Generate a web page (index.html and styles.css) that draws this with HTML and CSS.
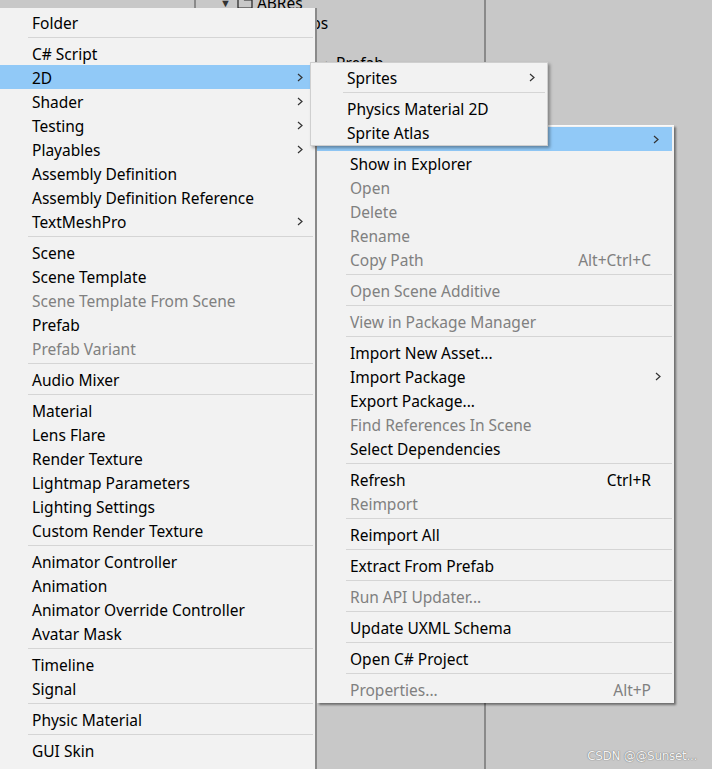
FILE: index.html
```html
<!DOCTYPE html>
<html>
<head>
<meta charset="utf-8">
<link rel="stylesheet" href="styles.css">
</head>
<body>
<div class="stage">
  <div class="panels">
    <div class="panel p1"></div>
    <div class="panel p2">
      <div class="tree">
        <div class="trow r0"><span class="tri">▼</span><svg class="fold" width="16" height="12" viewBox="0 0 16 12"><path d="M1 1h5l1.5 2H15v8H1z" fill="none" stroke="#222" stroke-width="1.2"/></svg><span>ABRes</span></div>
        <div class="trow r1"><span>Prefabs</span></div>
        <div class="trow r2"><span>UI</span></div>
        <div class="trow r3"><span class="tri small">▸</span><span>Prefab</span></div>
      </div>
    </div>
    <div class="panel p3"></div>
  </div>

  <div class="menu left">
    <div class="item">Folder</div>
    <div class="sep"></div>
    <div class="item">C# Script</div>
    <div class="item sub hl">2D<svg class="arr" width="6" height="9" viewBox="0 0 6 9"><polyline points="1,1 5,4.5 1,8"/></svg></div>
    <div class="item sub">Shader<svg class="arr" width="6" height="9" viewBox="0 0 6 9"><polyline points="1,1 5,4.5 1,8"/></svg></div>
    <div class="item sub">Testing<svg class="arr" width="6" height="9" viewBox="0 0 6 9"><polyline points="1,1 5,4.5 1,8"/></svg></div>
    <div class="item sub">Playables<svg class="arr" width="6" height="9" viewBox="0 0 6 9"><polyline points="1,1 5,4.5 1,8"/></svg></div>
    <div class="item">Assembly Definition</div>
    <div class="item">Assembly Definition Reference</div>
    <div class="item sub">TextMeshPro<svg class="arr" width="6" height="9" viewBox="0 0 6 9"><polyline points="1,1 5,4.5 1,8"/></svg></div>
    <div class="sep"></div>
    <div class="item">Scene</div>
    <div class="item">Scene Template</div>
    <div class="item dis">Scene Template From Scene</div>
    <div class="item">Prefab</div>
    <div class="item dis">Prefab Variant</div>
    <div class="sep"></div>
    <div class="item">Audio Mixer</div>
    <div class="sep"></div>
    <div class="item">Material</div>
    <div class="item">Lens Flare</div>
    <div class="item">Render Texture</div>
    <div class="item">Lightmap Parameters</div>
    <div class="item">Lighting Settings</div>
    <div class="item">Custom Render Texture</div>
    <div class="sep"></div>
    <div class="item">Animator Controller</div>
    <div class="item">Animation</div>
    <div class="item">Animator Override Controller</div>
    <div class="item">Avatar Mask</div>
    <div class="sep"></div>
    <div class="item">Timeline</div>
    <div class="item">Signal</div>
    <div class="sep"></div>
    <div class="item">Physic Material</div>
    <div class="sep"></div>
    <div class="item">GUI Skin</div>
  </div>

  <div class="menu right">
    <div class="item sub hl"><span></span><svg class="arr" width="6" height="9" viewBox="0 0 6 9"><polyline points="1,1 5,4.5 1,8"/></svg></div>
    <div class="item">Show in Explorer</div>
    <div class="item dis">Open</div>
    <div class="item dis">Delete</div>
    <div class="item dis">Rename</div>
    <div class="item dis"><span>Copy Path</span><span class="key">Alt+Ctrl+C</span></div>
    <div class="sep"></div>
    <div class="item dis">Open Scene Additive</div>
    <div class="sep"></div>
    <div class="item dis">View in Package Manager</div>
    <div class="sep"></div>
    <div class="item">Import New Asset...</div>
    <div class="item sub"><span>Import Package</span><svg class="arr" width="6" height="9" viewBox="0 0 6 9"><polyline points="1,1 5,4.5 1,8"/></svg></div>
    <div class="item">Export Package...</div>
    <div class="item dis">Find References In Scene</div>
    <div class="item">Select Dependencies</div>
    <div class="sep"></div>
    <div class="item"><span>Refresh</span><span class="key">Ctrl+R</span></div>
    <div class="item dis">Reimport</div>
    <div class="sep"></div>
    <div class="item">Reimport All</div>
    <div class="sep"></div>
    <div class="item">Extract From Prefab</div>
    <div class="sep"></div>
    <div class="item dis">Run API Updater...</div>
    <div class="sep"></div>
    <div class="item">Update UXML Schema</div>
    <div class="sep"></div>
    <div class="item">Open C# Project</div>
    <div class="sep"></div>
    <div class="item dis"><span>Properties...</span><span class="key">Alt+P</span></div>
  </div>

  <div class="menu sub2d">
    <div class="item sub">Sprites<svg class="arr" width="6" height="9" viewBox="0 0 6 9"><polyline points="1,1 5,4.5 1,8"/></svg></div>
    <div class="sep"></div>
    <div class="item">Physics Material 2D</div>
    <div class="item">Sprite Atlas</div>
  </div>

  <div class="watermark">CSDN @@Sunset...</div>
</div>
</body>
</html>
```

FILE: styles.css
```css
* { box-sizing: border-box; }
html, body {
  margin: 0;
  padding: 0;
  background: #c8c8c8;
}
body {
  font-family: "Noto Sans", "Open Sans", sans-serif;
  font-size: 15.5px;
  color: #000;
}
.stage {
  position: relative;
  width: 712px;
  height: 769px;
  overflow: hidden;
}
.panels {
  display: flex;
  height: 100%;
}
.panel {
  height: 100%;
}
.p1 {
  width: 196px;
  border-right: 2px solid #8a8a8a;
}
.p2 {
  width: 290px;
  border-right: 2px solid #8a8a8a;
}
.p3 {
  flex: 1;
}
.tree {
  display: flex;
  flex-direction: column;
  margin-top: -7px;
}
.trow {
  height: 20px;
  line-height: 20px;
  display: flex;
  align-items: center;
  gap: 4px;
  white-space: nowrap;
}
.r0 { padding-left: 24px; }
.r1 { padding-left: 77px; }
.r2 { padding-left: 67px; }
.r3 { padding-left: 130px; }
.tri { font-size: 11px; color: #333; }
.fold { margin-left: 2px; }

.menu {
  position: absolute;
  background: #f2f2f2;
  padding: 2px 0;
}
.item {
  height: 24px;
  padding-top: 2px;
  line-height: 22px;
  white-space: nowrap;
  display: flex;
  align-items: center;
  justify-content: space-between;
}
.item .arr { margin-top: -2px; }
.item.dis { color: #808080; }
.item.hl { background: #91c9f7; }
.sep {
  height: 7px;
  position: relative;
}
.sep::after {
  content: "";
  position: absolute;
  top: 3px;
  height: 1px;
  background: #d5d5d5;
}
.arr polyline {
  fill: none;
  stroke: #333;
  stroke-width: 1.2;
}

.menu.left {
  left: 0;
  top: 8px;
  width: 317px;
  bottom: -20px;
  border-right: 2px solid #8a8a8a;
}
.menu.left .item { padding-left: 32px; padding-right: 12px; }
.menu.left .sep::after { left: 28px; right: 2px; }

.menu.right {
  left: 317px;
  top: 125px;
  width: 357px;
  border-top: 1px solid #fafafa;
  box-shadow: 2px 2px 2px rgba(0,0,0,0.45);
  padding: 1px 0 2px 0;
}
.menu.right .item { padding-left: 33px; padding-right: 23px; }
.menu.right .item.sub { padding-right: 13px; }
.menu.right .hl { margin-right: 2px; }
.menu.right .sep::after { left: 29px; right: 2px; }

.menu.sub2d {
  left: 310px;
  top: 62px;
  width: 238px;
  border: 1px solid #cfcfcf;
  box-shadow: 2px 2px 3px rgba(0,0,0,0.35);
  padding: 2px 0 1px 0;
}
.menu.sub2d .item { padding-left: 36px; padding-right: 12px; }
.menu.sub2d .sep::after { left: 32px; right: 2px; }

.watermark {
  position: absolute;
  right: 15px;
  bottom: 6px;
  font-family: "DejaVu Sans", sans-serif;
  font-size: 12px;
  color: #f4f4f4;
  text-shadow: 0 0 1px #777, 0 0 1px #777;
  letter-spacing: -0.3px;
}
```
